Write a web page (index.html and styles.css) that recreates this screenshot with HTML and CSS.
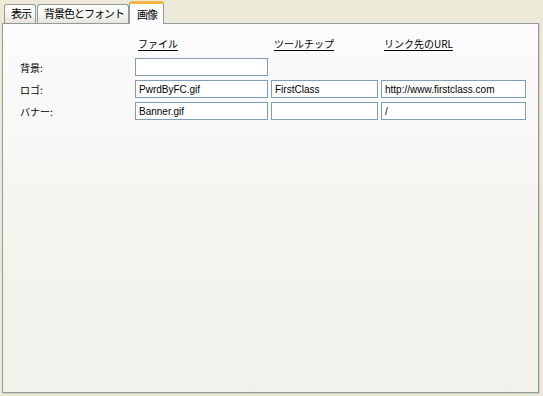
FILE: index.html
```html
<!DOCTYPE html>
<html lang="ja">
<head>
    <meta charset="UTF-8">
    <title>画像</title>
    <link rel="stylesheet" href="styles.css">
</head>
<body>
    <div class="tabs">
        <div class="tab">表示</div>
        <div class="tab">背景色とフォント</div>
        <div class="tab active">画像</div>
    </div>

    <div class="panel">
        <div class="image-grid">
            <!-- header row -->
            <span></span>
            <span class="col-head">ファイル</span>
            <span class="col-head">ツールチップ</span>
            <span class="col-head">リンク先のURL</span>

            <!-- background -->
            <label class="row-label">背景:</label>
            <input type="text" value="">
            <span></span>
            <span></span>

            <!-- logo -->
            <label class="row-label">ロゴ:</label>
            <input type="text" value="PwrdByFC.gif">
            <input type="text" value="FirstClass">
            <input type="text" value="http://www.firstclass.com">

            <!-- banner -->
            <label class="row-label">バナー:</label>
            <input type="text" value="Banner.gif">
            <input type="text" value="">
            <input type="text" value="/">
        </div>
    </div>
</body>
</html>
```

FILE: styles.css
```css
* {
    box-sizing: border-box;
    margin: 0;
    padding: 0;
}

body {
    font-family: "Noto Sans CJK JP", "Liberation Sans", sans-serif;
    font-size: 11px;
    color: #000;
    background-color: #ece9d8;
    width: 543px;
    height: 396px;
    overflow: hidden;
}

.tabs {
    display: flex;
    align-items: flex-end;
    height: 23px;
    padding-left: 4px;
    gap: 1px;
    position: relative;
    z-index: 1;
}

.tab {
    height: 19px;
    padding: 0 4px 0 6px;
    line-height: 17px;
    letter-spacing: -1px;
    border: 1px solid #919b9c;
    border-bottom: none;
    border-radius: 3px 3px 0 0;
    background: linear-gradient(#ffffff, #f3f3ef 60%, #e5e4dc);
}

.tab.active {
    height: 23px;
    margin-bottom: -1px;
    margin-left: -1px;
    padding: 0 6px 0 7px;
    line-height: 21px;
    background: #fcfcfe;
    border-top: 3px solid #f7b445;
    border-radius: 3px 3px 0 0;
}

.panel {
    width: 537px;
    height: 370px;
    margin-left: 2px;
    border: 1px solid #919b9c;
    box-shadow: 1px 1px 0 #d0d0bf;
    background: linear-gradient(#fcfcfe, #f4f3ee 60%, #f2f0ea);
    padding: 13px 0 0 17px;
}

.image-grid {
    display: grid;
    grid-template-columns: 112px 133px 107px 145px;
    grid-template-rows: 17px 18px 18px 18px;
    column-gap: 3px;
    row-gap: 4px;
    align-items: center;
}

.col-head {
    align-self: start;
    justify-self: start;
    margin-left: 3px;
    font-size: 10px;
    line-height: 13px;
    border-bottom: 1px solid #000;
}

.row-label {
    font-size: 10px;
}

input {
    height: 18px;
    width: 100%;
    border: 1px solid #7f9db9;
    background: #fff;
    padding: 0 3px;
    font-family: "Liberation Sans", sans-serif;
    font-size: 10px;
    color: #000;
    outline: none;
}
```
